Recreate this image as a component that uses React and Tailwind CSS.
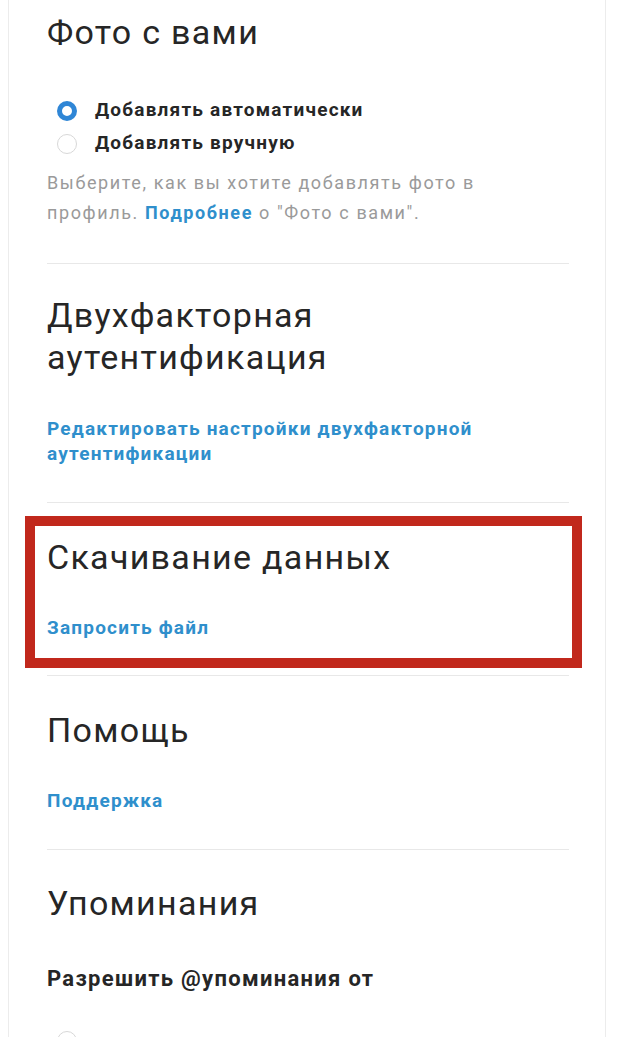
import React from 'react';

const Divider = () => <div className="h-px bg-[#e8e8e8] mr-[36px]" />;

const Radio = ({ checked, label }) => (
    <div className="flex items-center h-[33px]">
        {checked ? (
            <span className="w-[20px] h-[20px] rounded-full border-[5px] border-[#2f86d6] bg-white ml-[10px] mr-[18px] shrink-0" />
        ) : (
            <span className="w-[20px] h-[20px] rounded-full border border-[#d8d8d8] bg-white ml-[10px] mr-[18px] shrink-0" />
        )}
        {label && <span className="text-[19px] tracking-[1.2px] font-bold text-[#262626]">{label}</span>}
    </div>
);

export default function App() {
    const heading = "text-[34px] tracking-[1.3px] leading-[42px] text-[#262626]";
    const link = "text-[19px] tracking-[1.2px] leading-[25px] font-bold text-[#2f8fcc]";

    return (
        <div className="min-h-screen bg-white font-['Roboto','Liberation_Sans',sans-serif] overflow-hidden">
            <div className="ml-[8px] w-[598px] border-l border-r border-[#ececec] pl-[38px] min-h-[1037px]">

                {/* Фото с вами */}
                <h2 className={`pt-[11px] ${heading}`}>Фото с вами</h2>
                <div className="mt-[41px]">
                    <Radio checked label="Добавлять автоматически" />
                    <Radio label="Добавлять вручную" />
                </div>
                <p className="mt-[8px] text-[18px] tracking-[1.6px] leading-[30px] text-[#9a9a9a]">
                    Выберите, как вы хотите добавлять фото в<br />
                    профиль. <span className="text-[#2f8fcc] font-bold">Подробнее</span> о "Фото с вами".
                </p>
                <div className="mt-[35px]"><Divider /></div>

                {/* Двухфакторная аутентификация */}
                <h2 className={`mt-[30px] ${heading}`}>Двухфакторная<br />аутентификация</h2>
                <p className={`mt-[38px] ${link}`}>
                    Редактировать настройки двухфакторной<br />аутентификации
                </p>
                <div className="mt-[36px]"><Divider /></div>

                {/* Скачивание данных */}
                <div className="relative">
                    <div className="absolute left-[-22px] right-[23px] top-[13px] h-[152px] border-[10px] border-[#c1281c] pointer-events-none" />
                    <h2 className={`pt-[33px] ${heading}`}>Скачивание данных</h2>
                    <p className={`mt-[37px] ${link}`}>Запросить файл</p>
                    <div className="mt-[35px]"><Divider /></div>
                </div>

                {/* Помощь */}
                <h2 className={`mt-[33px] ${heading}`}>Помощь</h2>
                <p className={`mt-[37px] ${link}`}>Поддержка</p>
                <div className="mt-[36px]"><Divider /></div>

                {/* Упоминания */}
                <h2 className={`mt-[32px] ${heading}`}>Упоминания</h2>
                <p className="mt-[40px] text-[22px] tracking-[1.3px] leading-[30px] font-bold text-[#262626]">Разрешить @упоминания от</p>
                <div className="mt-[30px]">
                    <Radio />
                </div>
            </div>
        </div>
    );
}
